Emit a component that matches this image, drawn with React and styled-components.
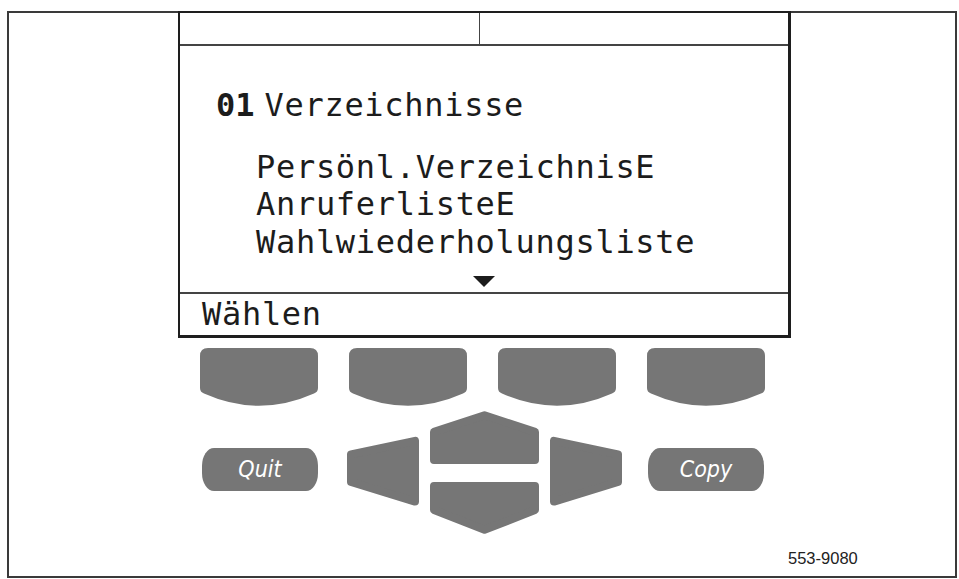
import React from 'react';
import styled, { createGlobalStyle } from 'styled-components';

const GlobalStyle = createGlobalStyle`
  html, body {
    margin: 0;
    padding: 0;
    background: #ffffff;
  }
  body {
    font-family: 'Liberation Sans', Arial, sans-serif;
  }
`;

const KEY_GREY = '#767676';

const menuItems = ['Persönl.VerzeichnisE', 'AnruferlisteE', 'Wahlwiederholungsliste'];
const softKeys = [1, 2, 3, 4];

const App = () => (
  <>
    <GlobalStyle />
    <Frame>
      <Display>
        <HeaderRow>
          <HeaderCell />
          <HeaderCell last />
        </HeaderRow>
        <Screen>
          <TitleLine>
            <Number>01</Number>
            <span>Verzeichnisse</span>
          </TitleLine>
          <MenuList>
            {menuItems.map((item) => (
              <MenuLine key={item}>{item}</MenuLine>
            ))}
          </MenuList>
          <MoreArrow />
        </Screen>
        <SoftLabelRow>Wählen</SoftLabelRow>
      </Display>

      <SoftKeyRow>
        {softKeys.map((k) => (
          <SoftKey key={k} viewBox="0 0 118 58">
            <path
              d="M0,8 Q0,0 8,0 H110 Q118,0 118,8 V40 Q118,44 114,45.5 Q59,70 4,45.5 Q0,44 0,40 Z"
              fill={KEY_GREY}
            />
          </SoftKey>
        ))}
      </SoftKeyRow>

      <NavRow>
        <PillKey>Quit</PillKey>
        <NavCluster viewBox="0 0 280 127">
          <g fill={KEY_GREY} stroke={KEY_GREY} strokeWidth="8" strokeLinejoin="round">
            <polygon points="6,45.3 70,31.9 70,92.6 6,73" />
            <polygon points="273,45.3 209,31.9 209,92.6 273,73" />
            <polygon points="139.5,6.2 190,22.9 190,51 89,51 89,22.9" />
            <polygon points="89,77 190,77 190,101.1 139.5,120.8 89,101.1" />
          </g>
        </NavCluster>
        <PillKey>Copy</PillKey>
      </NavRow>

      <FigureId>553-9080</FigureId>
    </Frame>
  </>
);

export default App;

const Frame = styled.div`
  box-sizing: border-box;
  margin: 11px 0 0 7px;
  width: 950px;
  height: 567px;
  border: 2px solid #3a3a3a;
  display: flex;
  flex-direction: column;
  align-items: flex-start;
`;

const Display = styled.div`
  box-sizing: border-box;
  margin: -2px 0 0 169px;
  width: 613px;
  border-style: solid;
  border-color: #1e1e1e;
  border-width: 2px 3px 3px 2px;
  display: flex;
  flex-direction: column;
  font-family: 'DejaVu Sans Mono', 'Liberation Mono', monospace;
  color: #1c1c1c;
`;

const HeaderRow = styled.div`
  display: flex;
  height: 31px;
  border-bottom: 2px solid #444;
`;

const HeaderCell = styled.div`
  flex: ${(p) => (p.last ? '0 0 308px' : '1')};
  border-right: ${(p) => (p.last ? 'none' : '1.5px solid #444')};
`;

const Screen = styled.div`
  position: relative;
  height: 246px;
  border-bottom: 2px solid #444;
  font-size: 32px;
  letter-spacing: 0.7px;
  line-height: 37.5px;
`;

const TitleLine = styled.div`
  margin: 41px 0 0 36px;
  display: flex;
  white-space: pre;
`;

const Number = styled.span`
  margin-right: 10px;
  font-weight: bold;
  letter-spacing: 0;
`;

const MenuList = styled.div`
  margin: 24px 0 0 76px;
  display: flex;
  flex-direction: column;
`;

const MenuLine = styled.div`
  white-space: pre;
`;

const MoreArrow = styled.div`
  position: absolute;
  left: 293px;
  bottom: 5px;
  width: 0;
  height: 0;
  border-left: 11px solid transparent;
  border-right: 11px solid transparent;
  border-top: 11px solid #1c1c1c;
`;

const SoftLabelRow = styled.div`
  height: 41px;
  padding-left: 22px;
  font-size: 32px;
  letter-spacing: 0.7px;
  line-height: 40px;
  white-space: pre;
`;

const SoftKeyRow = styled.div`
  display: flex;
  gap: 31px;
  margin: 10px 0 0 191px;
`;

const SoftKey = styled.svg`
  display: block;
  width: 118px;
  height: 58px;
`;

const NavRow = styled.div`
  display: flex;
  align-items: center;
  margin: 3px 0 0 193px;
`;

const PillKey = styled.div`
  box-sizing: border-box;
  width: 116px;
  height: 43px;
  border-radius: 12px / 18px;
  background: ${KEY_GREY};
  color: #ffffff;
  display: flex;
  align-items: center;
  justify-content: center;
  font-family: 'DejaVu Sans Condensed', 'Liberation Sans Narrow', 'DejaVu Sans', sans-serif;
  font-stretch: condensed;
  font-style: italic;
  font-size: 23px;
  padding-bottom: 2px;
  margin-top: -6px;
`;

const NavCluster = styled.svg`
  display: block;
  width: 280px;
  height: 127px;
  margin: 0 23px 0 27px;
`;

const FigureId = styled.div`
  margin: 14px 0 0 779px;
  font-family: 'Liberation Sans', Arial, sans-serif;
  font-size: 16.5px;
  line-height: 16px;
  color: #222;
`;
